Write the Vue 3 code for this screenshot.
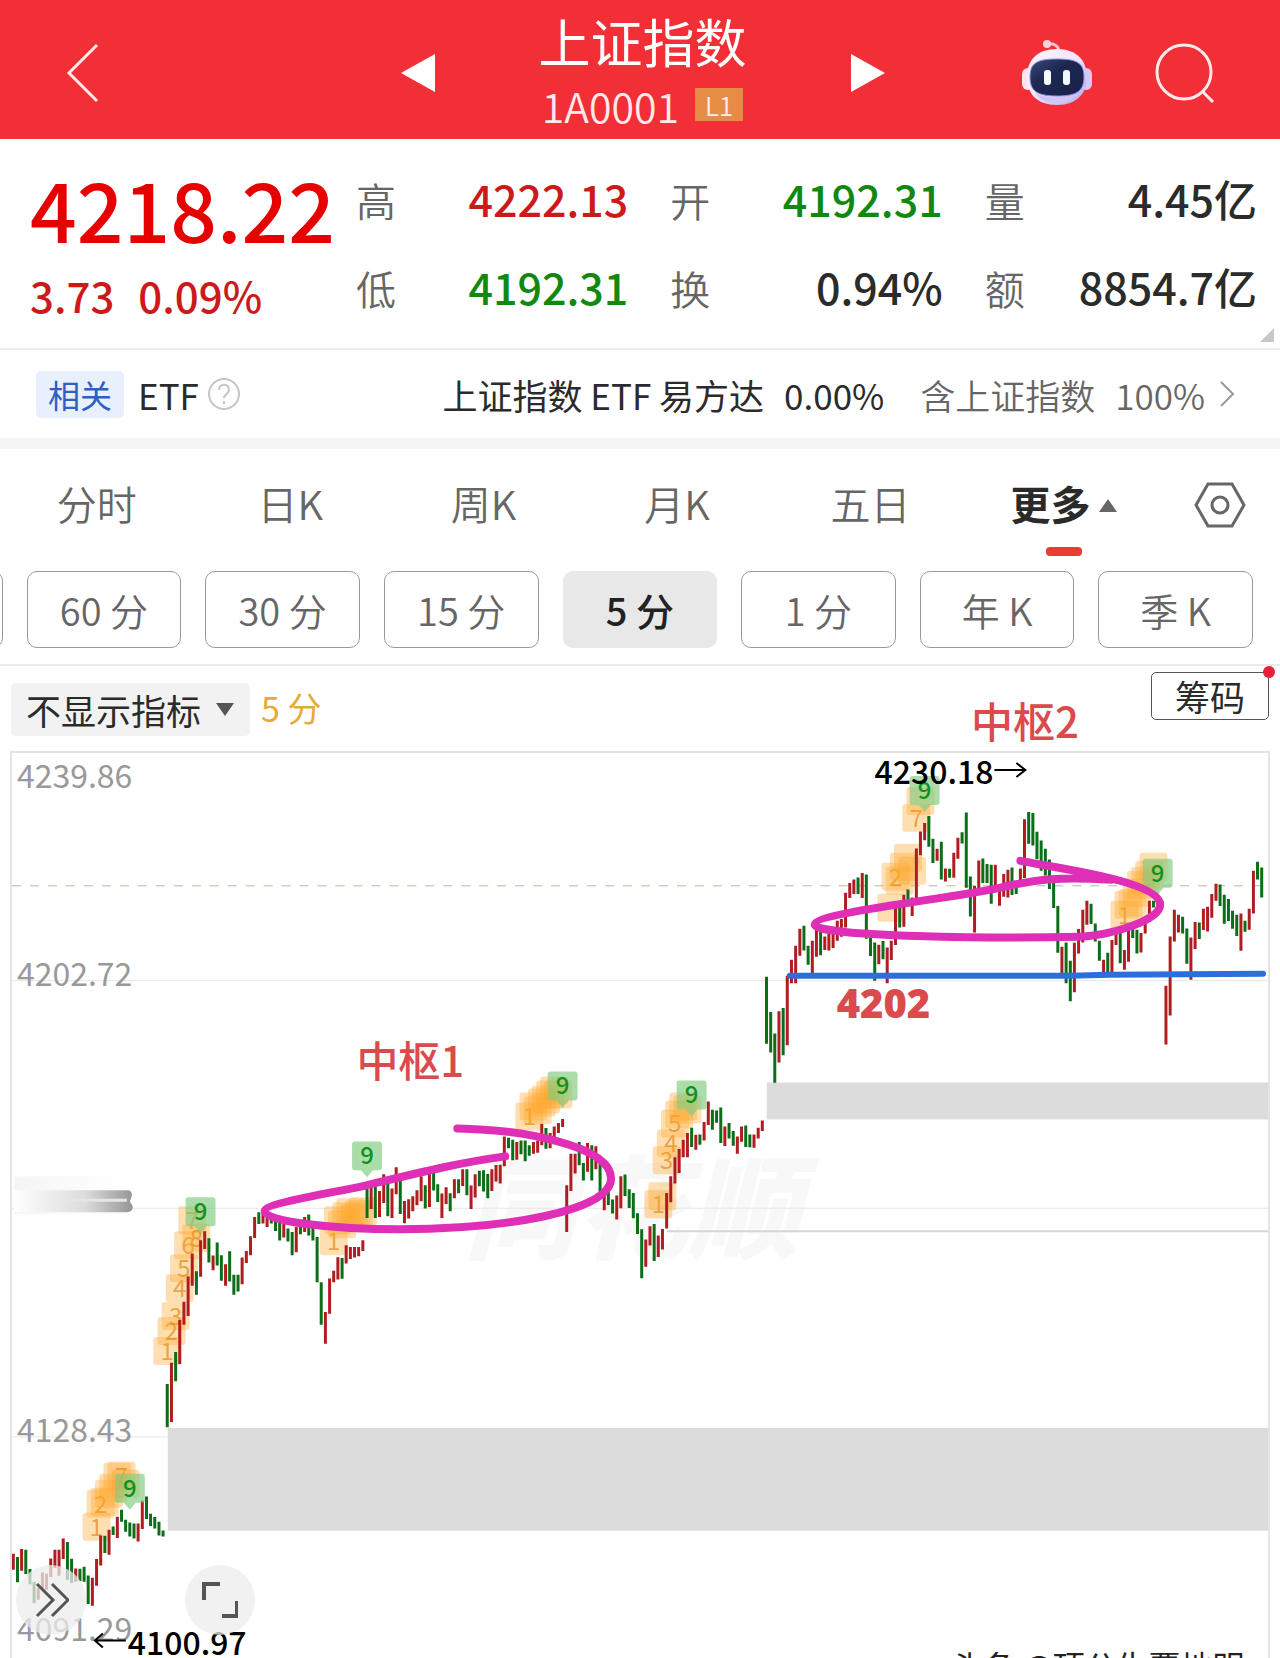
<script setup>
import { ref } from 'vue'

const quotes = [
  { label: '高', value: '4222.13', tone: 'up' },
  { label: '开', value: '4192.31', tone: 'down' },
  { label: '量', value: '4.45亿', tone: '' },
  { label: '低', value: '4192.31', tone: 'down' },
  { label: '换', value: '0.94%', tone: '' },
  { label: '额', value: '8854.7亿', tone: '' }
]

const tabs = ['分时', '日K', '周K', '月K', '五日', '更多']
const activeTab = ref('更多')

const periods = ['60 分', '30 分', '15 分', '5 分', '1 分', '年 K', '季 K']
const activePeriod = ref('5 分')

const indicator = ref('none')

// one entry per 5 minute bar: colour, high, low (thirds of a unit below base)
const sessions = [
  {
    base: 1380,
    bars:
      'r522-570 g532-608 r508-573 g510-583 g568-614 g606-670 r625-660 r578-630 r582-630 r536-592 ' +
      'r510-565 r510-588 r476-538 g487-600 g537-610 r566-606 g567-604 g561-606 g587-673 r594-678 ' +
      'r538-618 r467-557 g468-520 r450-525 g440-466 r411-475 g390-426 g420-456 g428-470 g431-476 ' +
      'r431-485 r363-448 g350-418 g402-439 g412-446 g426-467 g452-470'
  },
  {
    base: 1160,
    bars:
      'g672-802 r608-786 g576-664 r480-612 r425-494 r349-468 r280-377 g333-404 r240-350 r213-266 ' +
      'g234-307 r286-330 g247-316 g285-362 r312-377 g273-364 g344-404 g344-394 r292-372 r272-308 ' +
      'r228-285 r170-233 g156-191 r160-190 r165-200 g170-190 g178-212 g185-241 r190-232 g205-244 ' +
      'g215-285 r200-276 g185-222 r170-215 g163-226 g200-241 g230-366 g366-494 r456-551 r355-461 ' +
      'r332-366 r291-358 g293-356 r255-310 r260-296 r260-292 r260-288 r240-272'
  },
  {
    base: 1030,
    bars:
      'g475-563 r465-536 g465-563 r482-560 r432-518 g440-558 r475-563 r411-492 g440-551 r512-579 ' +
      'r507-565 r498-543 r480-525 r438-513 g465-535 r430-530 g425-481 g462-515 r490-563 r471-521 ' +
      'g489-543 r447-504 g447-489 r417-467 g417-495 r466-536 r432-502 g421-468 g420-484 g431-504 ' +
      'r417-482 r404-454 r403-460'
  },
  {
    base: 1050,
    bars:
      'r258-348 g262-294 g268-330 r275-328 g270-312 g270-333 g285-316 r275-310 r270-307 r221-285 ' +
      'g233-295 r248-294 r228-262 r218-248 r206-230 r405-545 r310-422 r310-370 g275-345 g338-391 ' +
      'r278-364 g285-391 r288-357 g316-430 r420-480 g425-464 g448-490 r436-508 r378-474 g373-437 ' +
      'g417-473 g428-504 g489-551 g537-684 r568-650 r528-586 g521-632 r556-620 r536-598 r428-535 ' +
      'r378-456 r321-400 r296-368 r268-321 r248-321 g232-290 r253-298 g252-283 r215-270 r153-224 ' +
      'g178-238 g180-217 g171-278 r228-287 g218-264 g242-286 r258-310 r228-274 g225-290 g252-291 ' +
      'r252-292 r232-264 r210-242'
  },
  {
    base: 740,
    bars:
      'g708-910 g814-936 g879-1027 r812-966 g802-944 r705-914 r657-728 r615-728 r564-645 g555-629 ' +
      'g615-672 r600-698 r560-648 g570-644 r587-628 r580-629 r570-622 r540-600 r535-588 r456-560 ' +
      'r427-472 r416-460 g410-460 r397-472 g401-594 g590-646 g605-720 r612-671 g601-656 r620-728 ' +
      'r600-658 r500-613 g480-560 r462-558 g446-480 r470-526 r323-480 r272-343 r246-298 g225-318 ' +
      'g294-367 r324-360 g303-416 r383-422 g384-411 r336-411 r291-354 g274-308 g215-441 g407-527 ' +
      'r435-575 r359-445 g353-427 g370-427 g372-489 r372-435 r430-495 r400-468 r387-470 g380-463 ' +
      'g425-460 r383-430 r235-412 g213-309 g216-314 g273-355 g299-390 g324-404 g356-445 g410-502 ' +
      'g496-636 r618-698 g605-728 g660-782 r606-755 r565-638 r507-605 r480-552 g489-550 g548-602 ' +
      'g600-660 r657-698 g636-698 r598-697 r575-613 g570-668 r628-687 r568-663 g560-592 g567-638 ' +
      'r577-635 r530-578 r480-543 g480-500 g490-520 g480-500 r735-912 r587-825 r507-602 r522-575 ' +
      'g528-578 g563-669 r590-717 r544-625 g545-595 r504-568 r498-572 r460-531 r429-480 g431-496 ' +
      'g462-549 g475-541 g510-564 g522-586 r518-630 g540-573 r504-567 r390-518 g363-416 g380-470'
  }
]

const barX = (i) => 12.3 + i * 4.168

const candles = { r: '', g: '' }
sessions
  .flatMap(({ base, bars }) => bars.split(' ').map((bar) => ({ base, bar })))
  .forEach(({ base, bar }, i) => {
    const [high, low] = bar.slice(1).split('-').map((v) => (base + v / 3).toFixed(1))
    candles[bar[0]] += `M${barX(i).toFixed(1)} ${high}V${low}`
  })

// nine-count runs: index of the bar under "1", the top of each tag,
// and the numbers that are not buried under later tags
const counts = [
  { start: 20, tops: [1513, 1490, 1488, 1480, 1474, 1463, 1462, 1470], shown: [1, 2, 7], nine: 1474 },
  { start: 37, tops: [1337, 1317, 1302, 1274, 1254, 1231, 1206, 1224], shown: [1, 2, 3, 4, 5, 6, 7, 8], nine: 1197 },
  { start: 77, tops: [1227, 1206, 1210, 1202, 1198, 1204, 1200, 1197], shown: [1], nine: 1141 },
  { start: 124, tops: [1102, 1092, 1096, 1088, 1085, 1080, 1076, 1080], shown: [1], nine: 1071 },
  { start: 155, tops: [1190, 1182, 1146, 1129, 1109, 1100, 1092, 1095], shown: [1, 3, 4, 5], nine: 1080 },
  { start: 211, tops: [893, 862, 866, 852, 843, 856, 803, 786], shown: [2, 7], nine: 775 },
  { start: 267, tops: [900, 890, 888, 878, 870, 866, 860, 852], shown: [1], nine: 858 }
]
</script>

<template>
  <div class="page">
    <header class="top-bar">
      <button class="icon-btn back" aria-label="返回">
        <svg width="34" height="60" viewBox="0 0 34 60"><path d="M31 2 3 30 31 58" /></svg>
      </button>
      <div class="switcher">
        <button class="icon-btn" aria-label="上一个">
          <svg class="solid" width="34" height="38" viewBox="0 0 34 38"><path d="M34 0V38L0 19Z" /></svg>
        </button>
        <div class="title">
          <h1>上证指数</h1>
          <p>1A0001 <span class="level">L1</span></p>
        </div>
        <button class="icon-btn" aria-label="下一个">
          <svg class="solid" width="34" height="38" viewBox="0 0 34 38"><path d="M0 0V38L34 19Z" /></svg>
        </button>
      </div>
      <div class="actions">
        <button class="icon-btn" aria-label="助手">
          <svg class="robot" width="72" height="68" viewBox="0 0 72 68">
            <defs>
              <linearGradient id="shell" x1="0" y1="0" x2="1" y2="1">
                <stop offset="0" stop-color="#fff4fa" />
                <stop offset="0.5" stop-color="#f1e6fb" />
                <stop offset="1" stop-color="#a9a4ef" />
              </linearGradient>
              <linearGradient id="visor" x1="0" y1="0" x2="1" y2="1">
                <stop offset="0" stop-color="#3c4a78" />
                <stop offset="0.4" stop-color="#1d2750" />
                <stop offset="1" stop-color="#19214a" />
              </linearGradient>
            </defs>
            <path d="M27 5C33 4 38 7 38 13" fill="none" stroke="#ffc4cf" stroke-width="3" />
            <circle cx="26" cy="5" r="4" fill="#ffd3da" />
            <rect x="1" y="29" width="12" height="22" rx="6" fill="#ffe3ee" />
            <rect x="59" y="29" width="12" height="22" rx="6" fill="#d9c8f4" />
            <path d="M36 10C56 10 66 22 66 38S56 66 36 66 6 55 6 38 16 10 36 10Z" fill="url(#shell)" />
            <path d="M14 54C26 60 46 60 58 54C52 62 45 64 36 64S20 62 14 54Z" fill="#cfc4f6" />
            <path
              d="M36 20C56 20 63 24 63 38S56 57 36 57 9 52 9 38 16 20 36 20Z"
              fill="url(#visor)"
              stroke="#8f8ce0"
              stroke-width="1"
            />
            <rect x="23" y="31" width="7" height="15" rx="3" fill="#f4f8ff" />
            <rect x="42" y="31" width="7" height="15" rx="3" fill="#f4f8ff" />
          </svg>
        </button>
        <button class="icon-btn" aria-label="搜索">
          <svg width="60" height="60" viewBox="0 0 60 60">
            <circle cx="29" cy="29" r="27" />
            <path d="M47 48 58 59" />
          </svg>
        </button>
      </div>
    </header>

    <section class="quote">
      <div class="price">
        <strong>4218.22</strong>
        <p><span>3.73</span><span>0.09%</span></p>
      </div>
      <dl class="stats">
        <div v-for="q in quotes" :key="q.label">
          <dt>{{ q.label }}</dt>
          <dd :class="q.tone">{{ q.value }}</dd>
        </div>
      </dl>
      <i class="corner"></i>
    </section>

    <section class="related">
      <span class="tag">相关</span>
      <span class="etf">ETF</span>
      <button class="icon-btn help" aria-label="说明">
        <svg width="34" height="34" viewBox="0 0 34 34">
          <circle cx="17" cy="17" r="15" />
          <path d="M12 13C12 6 22 6 22 13C22 17 17 17 17 21M17 24V27" />
        </svg>
      </button>
      <a class="fund" href="#">
        <span>上证指数 ETF 易方达</span>
        <span>0.00%</span>
        <span class="muted">含上证指数</span>
        <span class="muted">100%</span>
        <svg width="16" height="28" viewBox="0 0 16 28"><path d="M2 2 14 14 2 26" /></svg>
      </a>
    </section>

    <nav class="tabs">
      <button
        v-for="tab in tabs"
        :key="tab"
        class="tab"
        :class="{ active: tab === activeTab }"
        @click="activeTab = tab"
      >
        {{ tab }}<svg v-if="tab === '更多'" width="18" height="13" viewBox="0 0 18 13"><path d="M9 0 18 13H0Z" /></svg>
      </button>
      <button class="icon-btn settings" aria-label="设置">
        <svg width="52" height="46" viewBox="0 0 52 46">
          <path d="M14 2H38L50 23 38 44H14L2 23Z" />
          <circle cx="26" cy="23" r="8" />
        </svg>
      </button>
    </nav>

    <div class="periods">
      <button aria-label="更多周期"></button>
      <button
        v-for="period in periods"
        :key="period"
        :class="{ active: period === activePeriod }"
        @click="activePeriod = period"
      >
        {{ period }}
      </button>
    </div>

    <div class="toolbar">
      <div class="picker">
        <select v-model="indicator" aria-label="指标">
          <option value="none">不显示指标</option>
        </select>
        <svg width="18" height="13" viewBox="0 0 18 13"><path d="M0 0H18L9 13Z" /></svg>
      </div>
      <span class="current">{{ activePeriod }}</span>
      <span class="mark">中枢2</span>
      <button class="chips">筹码</button>
    </div>

    <div class="chart">
      <svg viewBox="11 752 1258 906" role="img" aria-label="5分钟K线">
        <defs>
          <linearGradient id="smear">
            <stop offset="0" stop-color="#fff" />
            <stop offset="0.6" stop-color="#dcdcdc" />
            <stop offset="1" stop-color="#969696" />
          </linearGradient>
          <linearGradient id="haze">
            <stop offset="0" stop-color="#f5f5f5" />
            <stop offset="1" stop-color="#fff" />
          </linearGradient>
        </defs>

        <text class="watermark" x="464" y="1250">同花顺</text>

        <path class="grid" d="M11 980H1269M11 1208H1269M11 1437H1269" />
        <path class="gap-line" d="M667 1231H1269" />
        <rect class="gap" x="767" y="1082" width="502" height="37" />
        <rect class="gap" x="167" y="1428" width="1102" height="103" />
        <path class="last" d="M11 885H1269" />

        <g class="axis">
          <text x="16" y="787">4239.86</text>
          <text x="16" y="985">4202.72</text>
          <text x="16" y="1442">4128.43</text>
          <text x="16" y="1641">4091.29</text>
        </g>
        <rect x="13" y="1176" width="112" height="38" fill="url(#haze)" />
        <path d="M13 1190H126Q132 1190 131 1196L129 1201 132 1206Q132 1212 126 1212H13Z" fill="url(#smear)" />
        <path d="M60 1200H126" stroke="#e6e6e6" stroke-width="3" />

        <g v-for="run in counts" :key="run.start">
          <g v-for="(top, n) in run.tops" :key="n" class="count">
            <rect :x="barX(run.start + n) - 14" :y="top" width="28" height="28" rx="3" />
            <text v-if="run.shown.includes(n + 1)" :x="barX(run.start + n)" :y="top + 23">{{ n + 1 }}</text>
          </g>
        </g>

        <path class="candle up-bar" :d="candles.r" />
        <path class="candle down-bar" :d="candles.g" />

        <g
          v-for="run in counts"
          :key="run.start"
          class="nine"
          :transform="`translate(${barX(run.start + 8)} ${run.nine})`"
        >
          <path d="M-12 0H12Q15 0 15 3V26Q15 29 12 29H6L0 36-6 29H-12Q-15 29-15 26V3Q-15 0-12 0Z" />
          <text y="23">9</text>
        </g>

        <g class="extreme">
          <text x="875" y="783">4230.18</text>
          <path d="M995 769H1026M1017 762 1026 769 1017 776" />
          <text x="127" y="1655">4100.97</text>
          <path d="M125 1641H94M102 1634 94 1641 102 1648" />
        </g>

        <path
          class="loop"
          d="M457 1128C520 1129 611 1145 611 1178C611 1212 500 1229 400 1229C330 1229 264 1221 264 1211C264 1203 330 1193 366 1185C420 1172 460 1162 505 1156"
        />
        <path
          class="loop"
          d="M1021 860C1075 870 1161 882 1161 904C1161 920 1110 935 1080 936C1000 938 815 936 815 924C815 912 950 898 1000 887C1040 878 1060 876 1112 879"
        />
        <path class="support" d="M790 975H1070L1110 974 1264 973" />
        <text class="note" x="356" y="1077">中枢1</text>
        <text class="note price-note" x="837" y="1017">4202</text>

        <text class="byline" x="952" y="1679">头条 @顶公生覆地明</text>
      </svg>
      <div class="tools">
        <button aria-label="展开">
          <svg width="36" height="36" viewBox="0 0 36 36"><path d="M4 2 20 18 4 34M19 2 35 18 19 34" /></svg>
        </button>
        <button aria-label="全屏">
          <svg class="bold" width="36" height="36" viewBox="0 0 36 36"><path d="M2 18V2H18M20 34H35V19" /></svg>
        </button>
      </div>
    </div>
  </div>
</template>

<style>
body {
  margin: 0;
  background: #fff;
}
</style>

<style scoped>
.page {
  overflow: hidden;
  color: #2b2b2b;
  font-family: 'Noto Sans CJK SC', sans-serif;
}

h1,
p,
dl,
dd {
  margin: 0;
}

button,
select {
  margin: 0;
  padding: 0;
  border: 0;
  background: none;
  color: inherit;
  font-family: inherit;
  cursor: pointer;
}

svg {
  fill: none;
}

.icon-btn {
  display: flex;
}

/* header */
.top-bar {
  display: grid;
  grid-template-columns: 1fr auto 1fr;
  align-items: center;
  box-sizing: border-box;
  height: 139px;
  padding: 6px 65px 0 66px;
  background: #f22f37;
  color: #fff;
}

.top-bar svg {
  stroke: #ffe9ea;
  stroke-width: 3;
}

.top-bar .solid {
  fill: #fff;
  stroke: none;
}

.top-bar .robot {
  stroke: none;
}

.switcher {
  display: flex;
  align-items: center;
  gap: 100px;
  padding-left: 4px;
}

.title {
  width: 216px;
  padding-bottom: 4px;
  text-align: center;
}

.title h1 {
  font-size: 52px;
  font-weight: 400;
  line-height: 68px;
}

.title p {
  display: flex;
  justify-content: center;
  align-items: center;
  gap: 16px;
  font-size: 41px;
  font-weight: 350;
  line-height: 60px;
  color: #ffe9ea;
}

.level {
  padding: 0 10px;
  background: #e58d45;
  font-size: 26px;
  line-height: 33px;
}

.actions {
  display: flex;
  justify-content: flex-end;
  align-items: center;
  gap: 62px;
}

/* quote */
.quote {
  position: relative;
  display: flex;
  justify-content: space-between;
  padding: 15px 23px 10px 30px;
  border-bottom: 2px solid #ebebeb;
}

.price {
  color: #e60000;
}

.price strong {
  display: block;
  padding-top: 10px;
  font-size: 82px;
  font-weight: 500;
  line-height: 88px;
}

.price p {
  display: flex;
  gap: 24px;
  color: #cc1a1a;
  font-size: 42px;
  font-weight: 500;
  line-height: 86px;
}

.stats {
  display: grid;
  grid-template-columns: repeat(3, 1fr);
  align-content: start;
  gap: 0 42px;
  width: 901px;
}

.stats div {
  display: flex;
  justify-content: space-between;
  align-items: center;
  height: 88px;
}

.stats dt {
  padding-top: 3px;
  color: #666;
  font-size: 40px;
  font-weight: 350;
}

.stats dd {
  font-size: 43px;
  font-weight: 500;
}

.stats .up {
  color: #cc1a1a;
}

.stats .down {
  color: #11880f;
}

.corner {
  position: absolute;
  right: 6px;
  bottom: 6px;
  border-bottom: 14px solid #c8c8c8;
  border-left: 14px solid transparent;
}

/* related fund */
.related {
  display: flex;
  align-items: center;
  height: 88px;
  padding: 0 45px 0 36px;
  border-bottom: 11px solid #f5f5f5;
  font-size: 35px;
}

.tag {
  margin-right: 14px;
  padding: 0 12px;
  border-radius: 5px;
  background: #e8effd;
  color: #2f5fc4;
  font-size: 32px;
  line-height: 47px;
}

.help {
  margin-left: 8px;
}

.help svg {
  stroke: #c4c4c4;
  stroke-width: 2;
}

.fund {
  display: flex;
  align-items: center;
  margin-left: auto;
  color: inherit;
  text-decoration: none;
}

.fund span {
  margin-right: 20px;
}

.fund span:nth-child(2) {
  margin-right: 36px;
}

.fund .muted {
  color: #666;
  font-weight: 350;
}

.fund .muted + svg {
  margin-left: -6px;
  stroke: #999;
  stroke-width: 2;
}

/* tabs */
.tabs {
  display: flex;
  align-items: center;
  height: 111px;
}

.tab {
  position: relative;
  flex: 193;
  height: 100%;
  padding-bottom: 4px;
  color: #666;
  font-size: 40px;
  font-weight: 350;
}

.tab svg {
  margin-left: 9px;
  vertical-align: 8px;
  fill: #666;
}

.tab.active {
  color: #2a2a2a;
  font-weight: 700;
}

.tab.active::after {
  content: '';
  position: absolute;
  bottom: 4px;
  left: 50%;
  width: 36px;
  height: 9px;
  margin-left: -18px;
  border-radius: 4px;
  background: #e83c35;
}

.settings {
  flex: 119;
  justify-content: center;
}

.settings svg {
  stroke: #666;
  stroke-width: 3;
}

/* periods */
.periods {
  display: grid;
  grid-template-columns: repeat(8, 1fr);
  gap: 24px;
  margin-left: -152px;
  padding: 11px 27px 16px 0;
  border-bottom: 2px solid #ebebeb;
}

.periods button {
  height: 77px;
  border: 1px solid #999;
  border-radius: 10px;
  color: #666;
  font-size: 38px;
  font-weight: 350;
}

.periods .active {
  border-color: #e8e8e8;
  background: #e8e8e8;
  color: #222;
  font-weight: 500;
}

/* chart toolbar */
.toolbar {
  display: flex;
  align-items: flex-start;
  height: 85px;
  padding: 0 11px;
  font-size: 35px;
}

.picker {
  position: relative;
  margin-top: 17px;
}

.picker select {
  height: 53px;
  padding: 0 48px 0 15px;
  border-radius: 5px;
  appearance: none;
  background: #f2f2f2;
  font-size: 35px;
}

.picker svg {
  position: absolute;
  top: 20px;
  right: 16px;
  fill: #555;
  pointer-events: none;
}

.current {
  margin: 17px 0 0 11px;
  color: #e5ab35;
  font-size: 34px;
  line-height: 50px;
}

.mark {
  margin: 26px 72px 0 auto;
  color: #db4a4d;
  font-size: 42px;
  font-weight: 500;
  line-height: 56px;
}

.chips {
  position: relative;
  height: 48px;
  margin-top: 6px;
  padding: 0 23px;
  border: 1px solid #555;
  border-radius: 5px;
  font-size: 35px;
  line-height: 44px;
}

.chips::after {
  content: '';
  position: absolute;
  top: -7px;
  right: -7px;
  width: 12px;
  height: 12px;
  border-radius: 50%;
  background: #e5203a;
}

/* chart */
.chart {
  position: relative;
  margin: 0 10px;
  border: 2px solid #e4e4e4;
  border-bottom: 0;
}

.chart > svg {
  display: block;
  width: 100%;
}

.watermark {
  fill: #f8f8f8;
  font-size: 112px;
  font-style: italic;
  font-weight: 900;
}

.grid {
  stroke: #e6e6e6;
  stroke-width: 1;
}

.gap {
  fill: #dcdcdc;
}

.gap-line {
  stroke: #d6d6da;
  stroke-width: 2;
}

.last {
  stroke: #bdb59a;
  stroke-width: 1;
  stroke-dasharray: 9 9;
}

.axis {
  fill: #999;
  font-size: 32px;
}

.candle {
  stroke-width: 3;
}

.up-bar {
  stroke: #b01c20;
}

.down-bar {
  stroke: #0c6e18;
}

.count rect {
  fill: #ffa52a;
  fill-opacity: 0.36;
}

.count text,
.nine text {
  font-size: 24px;
  text-anchor: middle;
}

.count text {
  fill: #e08a10;
  fill-opacity: 0.7;
}

.nine path {
  fill: #7ecb7e;
  fill-opacity: 0.65;
}

.nine text {
  fill: #12901c;
  font-weight: 500;
}

.extreme {
  fill: #000;
  font-size: 32px;
  font-weight: 500;
}

.extreme path {
  fill: none;
  stroke: #000;
  stroke-width: 2;
}

.loop {
  stroke: #df2fb6;
  stroke-width: 8;
  stroke-linecap: round;
  stroke-linejoin: round;
}

.support {
  stroke: #2c6fdc;
  stroke-width: 6;
  stroke-linecap: round;
}

.note {
  fill: #db4a4d;
  font-size: 42px;
  font-weight: 500;
}

.price-note {
  font-family: 'Open Sans', 'Noto Sans', sans-serif;
  font-weight: 800;
  font-size: 40px;
}

.byline {
  fill: #222;
  font-size: 32px;
}

.tools {
  position: absolute;
  bottom: 23px;
  left: 4px;
  display: flex;
  gap: 99px;
}

.tools button {
  display: flex;
  justify-content: center;
  align-items: center;
  width: 70px;
  height: 70px;
  border-radius: 50%;
  background: rgba(236, 236, 236, 0.75);
}

.tools svg {
  stroke: #555;
  stroke-width: 3;
}

.tools .bold {
  stroke-width: 4;
}
</style>
